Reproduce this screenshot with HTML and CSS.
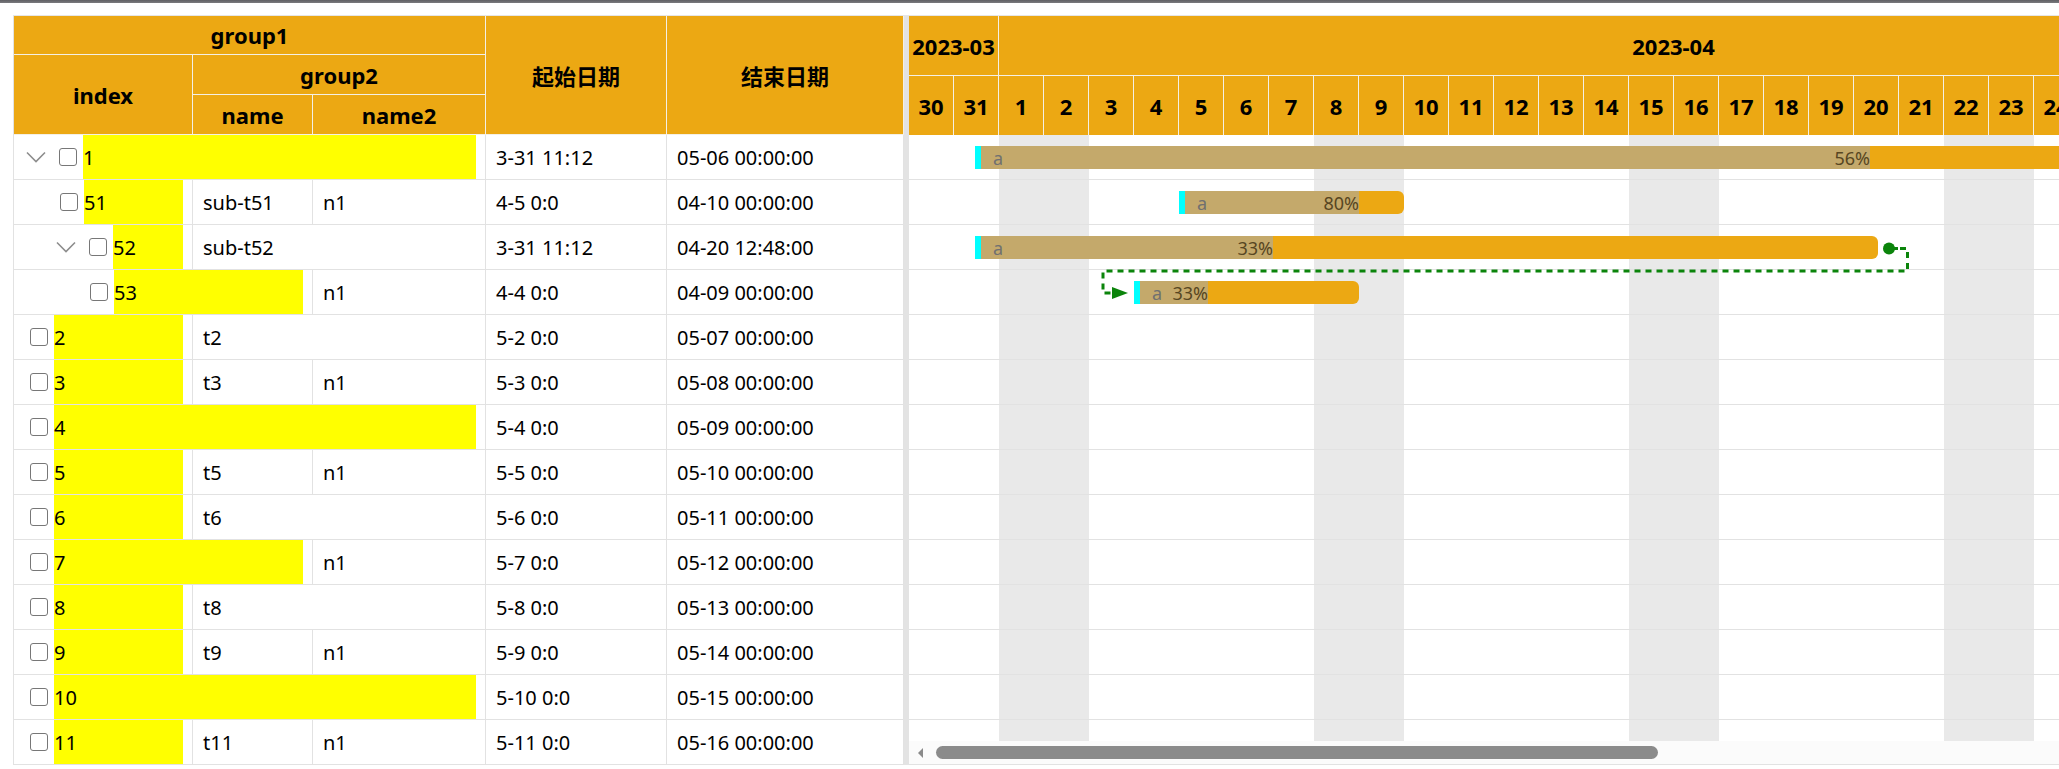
FILE: index.html
```html
<!DOCTYPE html>
<html lang="zh-CN">
<head>
<meta charset="utf-8">
<title>Gantt</title>
<link rel="stylesheet" href="styles.css">
</head>
<body>
<div class="topbar"></div>
<div class="app">
  <div class="table">
    <div class="th h-group1">group1</div>
    <div class="th h-index">index</div>
    <div class="th h-group2">group2</div>
    <div class="th h-name">name</div>
    <div class="th h-name2">name2</div>
    <div class="th h-start">起始日期</div>
    <div class="th h-end">结束日期</div>

    <!-- row 1 -->
    <div class="td idx span3"><span class="chev"><svg width="20" height="12" viewBox="0 0 20 12"><path d="M1 1.5 L10 10.5 L19 1.5"/></svg></span><span class="cb"></span><span class="hl">1</span></div>
    <div class="td">3-31 11:12</div>
    <div class="td">05-06 00:00:00</div>
    <!-- row 51 -->
    <div class="td idx"><span class="ind1"></span><span class="cb"></span><span class="hl">51</span></div>
    <div class="td">sub-t51</div>
    <div class="td">n1</div>
    <div class="td">4-5 0:0</div>
    <div class="td">04-10 00:00:00</div>
    <!-- row 52 -->
    <div class="td idx"><span class="ind1"></span><span class="chev"><svg width="20" height="12" viewBox="0 0 20 12"><path d="M1 1.5 L10 10.5 L19 1.5"/></svg></span><span class="cb"></span><span class="hl">52</span></div>
    <div class="td span2">sub-t52</div>
    <div class="td">3-31 11:12</div>
    <div class="td">04-20 12:48:00</div>
    <!-- row 53 -->
    <div class="td idx span2"><span class="ind2"></span><span class="cb"></span><span class="hl">53</span></div>
    <div class="td">n1</div>
    <div class="td">4-4 0:0</div>
    <div class="td">04-09 00:00:00</div>
    <!-- row 2 -->
    <div class="td idx"><span class="cb"></span><span class="hl">2</span></div>
    <div class="td span2">t2</div>
    <div class="td">5-2 0:0</div>
    <div class="td">05-07 00:00:00</div>
    <!-- row 3 -->
    <div class="td idx"><span class="cb"></span><span class="hl">3</span></div>
    <div class="td">t3</div>
    <div class="td">n1</div>
    <div class="td">5-3 0:0</div>
    <div class="td">05-08 00:00:00</div>
    <!-- row 4 -->
    <div class="td idx span3"><span class="cb"></span><span class="hl">4</span></div>
    <div class="td">5-4 0:0</div>
    <div class="td">05-09 00:00:00</div>
    <!-- row 5 -->
    <div class="td idx"><span class="cb"></span><span class="hl">5</span></div>
    <div class="td">t5</div>
    <div class="td">n1</div>
    <div class="td">5-5 0:0</div>
    <div class="td">05-10 00:00:00</div>
    <!-- row 6 -->
    <div class="td idx"><span class="cb"></span><span class="hl">6</span></div>
    <div class="td span2">t6</div>
    <div class="td">5-6 0:0</div>
    <div class="td">05-11 00:00:00</div>
    <!-- row 7 -->
    <div class="td idx span2"><span class="cb"></span><span class="hl">7</span></div>
    <div class="td">n1</div>
    <div class="td">5-7 0:0</div>
    <div class="td">05-12 00:00:00</div>
    <!-- row 8 -->
    <div class="td idx"><span class="cb"></span><span class="hl">8</span></div>
    <div class="td span2">t8</div>
    <div class="td">5-8 0:0</div>
    <div class="td">05-13 00:00:00</div>
    <!-- row 9 -->
    <div class="td idx"><span class="cb"></span><span class="hl">9</span></div>
    <div class="td">t9</div>
    <div class="td">n1</div>
    <div class="td">5-9 0:0</div>
    <div class="td">05-14 00:00:00</div>
    <!-- row 10 -->
    <div class="td idx span3"><span class="cb"></span><span class="hl">10</span></div>
    <div class="td">5-10 0:0</div>
    <div class="td">05-15 00:00:00</div>
    <!-- row 11 -->
    <div class="td idx"><span class="cb"></span><span class="hl">11</span></div>
    <div class="td">t11</div>
    <div class="td">n1</div>
    <div class="td">5-11 0:0</div>
    <div class="td">05-16 00:00:00</div>
  </div>

  <div class="splitter"></div>

  <div class="gantt">
    <div class="g-head">
      <div class="g-months">
        <div class="g-month m-short">2023-03</div>
        <div class="g-month m-apr">2023-04</div>
        <div class="g-month m-may">2023-05</div>
      </div>
      <div class="g-days">
        <div class="g-day">30</div><div class="g-day">31</div>
        <div class="g-day">1</div><div class="g-day">2</div><div class="g-day">3</div><div class="g-day">4</div><div class="g-day">5</div><div class="g-day">6</div><div class="g-day">7</div><div class="g-day">8</div><div class="g-day">9</div><div class="g-day">10</div>
        <div class="g-day">11</div><div class="g-day">12</div><div class="g-day">13</div><div class="g-day">14</div><div class="g-day">15</div><div class="g-day">16</div><div class="g-day">17</div><div class="g-day">18</div><div class="g-day">19</div><div class="g-day">20</div>
        <div class="g-day">21</div><div class="g-day">22</div><div class="g-day">23</div><div class="g-day">24</div><div class="g-day">25</div><div class="g-day">26</div><div class="g-day">27</div><div class="g-day">28</div><div class="g-day">29</div><div class="g-day">30</div>
        <div class="g-day">1</div><div class="g-day">2</div><div class="g-day">3</div><div class="g-day">4</div><div class="g-day">5</div><div class="g-day">6</div>
      </div>
    </div>
    <div class="g-body">
      <div class="g-canvas">
        <div class="g-row">
          <div class="bar" style="left:66px;width:1599px"><div class="prog" style="width:895px">56%</div><span class="start"></span><span class="lbl">a</span></div>
        </div>
        <div class="g-row">
          <div class="bar round" style="left:270px;width:225px"><div class="prog" style="width:180px">80%</div><span class="start"></span><span class="lbl">a</span></div>
        </div>
        <div class="g-row">
          <div class="bar round" style="left:66px;width:903px"><div class="prog" style="width:298px">33%</div><span class="start"></span><span class="lbl">a</span></div>
        </div>
        <div class="g-row">
          <div class="bar round" style="left:225px;width:225px"><div class="prog" style="width:74px">33%</div><span class="start"></span><span class="lbl">a</span></div>
        </div>
        <div class="g-row"></div>
        <div class="g-row"></div>
        <div class="g-row"></div>
        <div class="g-row"></div>
        <div class="g-row"></div>
        <div class="g-row"></div>
        <div class="g-row"></div>
        <div class="g-row"></div>
        <div class="g-row"></div>
        <div class="g-row"></div>
        <svg class="deps" width="1710" height="606" viewBox="0 0 1710 606">
          <circle cx="980" cy="113.5" r="6" fill="#0b840b"/>
          <path class="dep-solid" d="M980 113.5 H989"/>
          <path class="dep-line" d="M991 113.5 H998.5 V136 H194 V158 H204"/>
          <polygon points="203,152 219,158 203,164" fill="#0b840b"/>
        </svg>
      </div>
    </div>
    <div class="g-scroll">
      <span class="arrow"></span>
      <span class="thumb"></span>
    </div>
  </div>
</div>
</body>
</html>
```

FILE: styles.css
```css
* { box-sizing: border-box; }

body {
  margin: 0;
  font-family: "Noto Sans", "Noto Sans CJK SC", sans-serif;
  font-size: 20px;
  color: #000;
  background: #fff;
  overflow: hidden;
}

.topbar {
  height: 3px;
  background: linear-gradient(#5f5f63, #7a7a7e);
}

.app {
  display: flex;
  margin: 12px 0 0 13px;
  border-top: 1px solid #e6e6e6;
  height: 750px;
}

/* ---------- left table ---------- */
.table {
  flex: none;
  display: grid;
  grid-template-columns: 179px 120px 173px 181px 237px;
  grid-template-rows: 39px 40px 40px;
  grid-auto-rows: 45px;
  align-content: start;
  border-left: 1px solid #e2e2e2;
  overflow: hidden;
}

.th {
  background: #eca813;
  font-weight: 700;
  font-size: 22px;
  display: flex;
  align-items: center;
  justify-content: center;
  border-right: 1px solid #f4f0e6;
  border-bottom: 1px solid #f4f0e6;
  white-space: nowrap;
}

.h-group1 { grid-row: 1; grid-column: 1 / 4; }
.h-index  { grid-row: 2 / 4; grid-column: 1; }
.h-group2 { grid-row: 2; grid-column: 2 / 4; }
.h-name   { grid-row: 3; grid-column: 2; }
.h-name2  { grid-row: 3; grid-column: 3; }
.h-start  { grid-row: 1 / 4; grid-column: 4; }
.h-end    { grid-row: 1 / 4; grid-column: 5; }

.td {
  display: flex;
  align-items: center;
  padding-left: 10px;
  border-right: 1px solid #e2e2e2;
  border-bottom: 1px solid #e2e2e2;
  white-space: nowrap;
  overflow: hidden;
}

.span2 { grid-column: span 2; }
.span3 { grid-column: span 3; }

.td.idx {
  padding-left: 12px;
  padding-right: 9px;
  align-items: stretch;
}

.ind1 { flex: none; width: 30px; }
.ind2 { flex: none; width: 60px; }

.chev {
  flex: none;
  width: 29px;
  display: flex;
  align-items: center;
}
.chev svg path {
  fill: none;
  stroke: #8d8d8d;
  stroke-width: 1.6;
}

.cb {
  flex: none;
  align-self: center;
  width: 18px;
  height: 18px;
  margin-left: 4px;
  margin-right: 6px;
  border: 1.5px solid #777;
  border-radius: 3px;
  background: #fff;
}

.hl {
  flex: 1;
  display: flex;
  align-items: center;
  background: #ffff00;
}

.splitter {
  flex: none;
  width: 5px;
  background: #e3e3e3;
}

/* ---------- gantt ---------- */
.gantt {
  flex: 1;
  min-width: 0;
  display: flex;
  flex-direction: column;
  overflow: hidden;
  border-bottom: 1px solid #e2e2e2;
}

.g-head {
  flex: none;
  background: #eca813;
  font-weight: 700;
  font-size: 22px;
}

.g-months, .g-days {
  display: flex;
}

.g-month {
  flex: none;
  height: 60px;
  display: flex;
  align-items: center;
  justify-content: center;
  white-space: nowrap;
  border-right: 1px solid #f4f0e6;
  border-bottom: 1px solid #f4f0e6;
}
.m-short { width: 90px; }
.m-apr   { width: 1350px; }
.m-may   { width: 270px; }

.g-day {
  flex: none;
  width: 45px;
  height: 59px;
  display: flex;
  align-items: center;
  justify-content: center;
  border-right: 1px solid #f4f0e6;
}

.g-body {
  flex: none;
  height: 606px;
  overflow: hidden;
}

.g-canvas {
  position: relative;
  width: 1710px;
  height: 606px;
  background-image: repeating-linear-gradient(to right,
    transparent 0 90px,
    #e9e9e9 90px 180px,
    transparent 180px 315px);
}

.g-row {
  position: relative;
  height: 45px;
  border-bottom: 1px solid #e2e2e2;
}

.bar {
  position: absolute;
  top: 11px;
  height: 23px;
  background: #eca813;
  overflow: hidden;
  font-size: 18px;
}
.bar.round { border-radius: 0 6px 6px 0; }

.prog {
  position: absolute;
  left: 0;
  top: 0;
  bottom: 0;
  background: #c4a96b;
  display: flex;
  align-items: center;
  justify-content: flex-end;
  color: #574622;
  line-height: 1;
}

.start {
  position: absolute;
  left: 0;
  top: 0;
  bottom: 0;
  width: 6px;
  background: #00ffff;
}

.lbl {
  position: absolute;
  left: 18px;
  top: 0;
  bottom: 0;
  display: flex;
  align-items: center;
  color: #707070;
  line-height: 1;
}

.deps {
  position: absolute;
  left: 0;
  top: 0;
  pointer-events: none;
}
.dep-solid {
  fill: none;
  stroke: #0b840b;
  stroke-width: 3;
}
.dep-line {
  fill: none;
  stroke: #0b840b;
  stroke-width: 3;
  stroke-dasharray: 6 5;
}

.g-scroll {
  flex: none;
  height: 23px;
  background: #fbfbfb;
  display: flex;
  align-items: center;
  padding-left: 9px;
}
.arrow {
  flex: none;
  width: 0;
  height: 0;
  border-top: 5px solid transparent;
  border-bottom: 5px solid transparent;
  border-right: 5px solid #8a8a8a;
}
.thumb {
  flex: none;
  margin-left: 13px;
  width: 722px;
  height: 13px;
  border-radius: 7px;
  background: #8b8b8b;
}
```
